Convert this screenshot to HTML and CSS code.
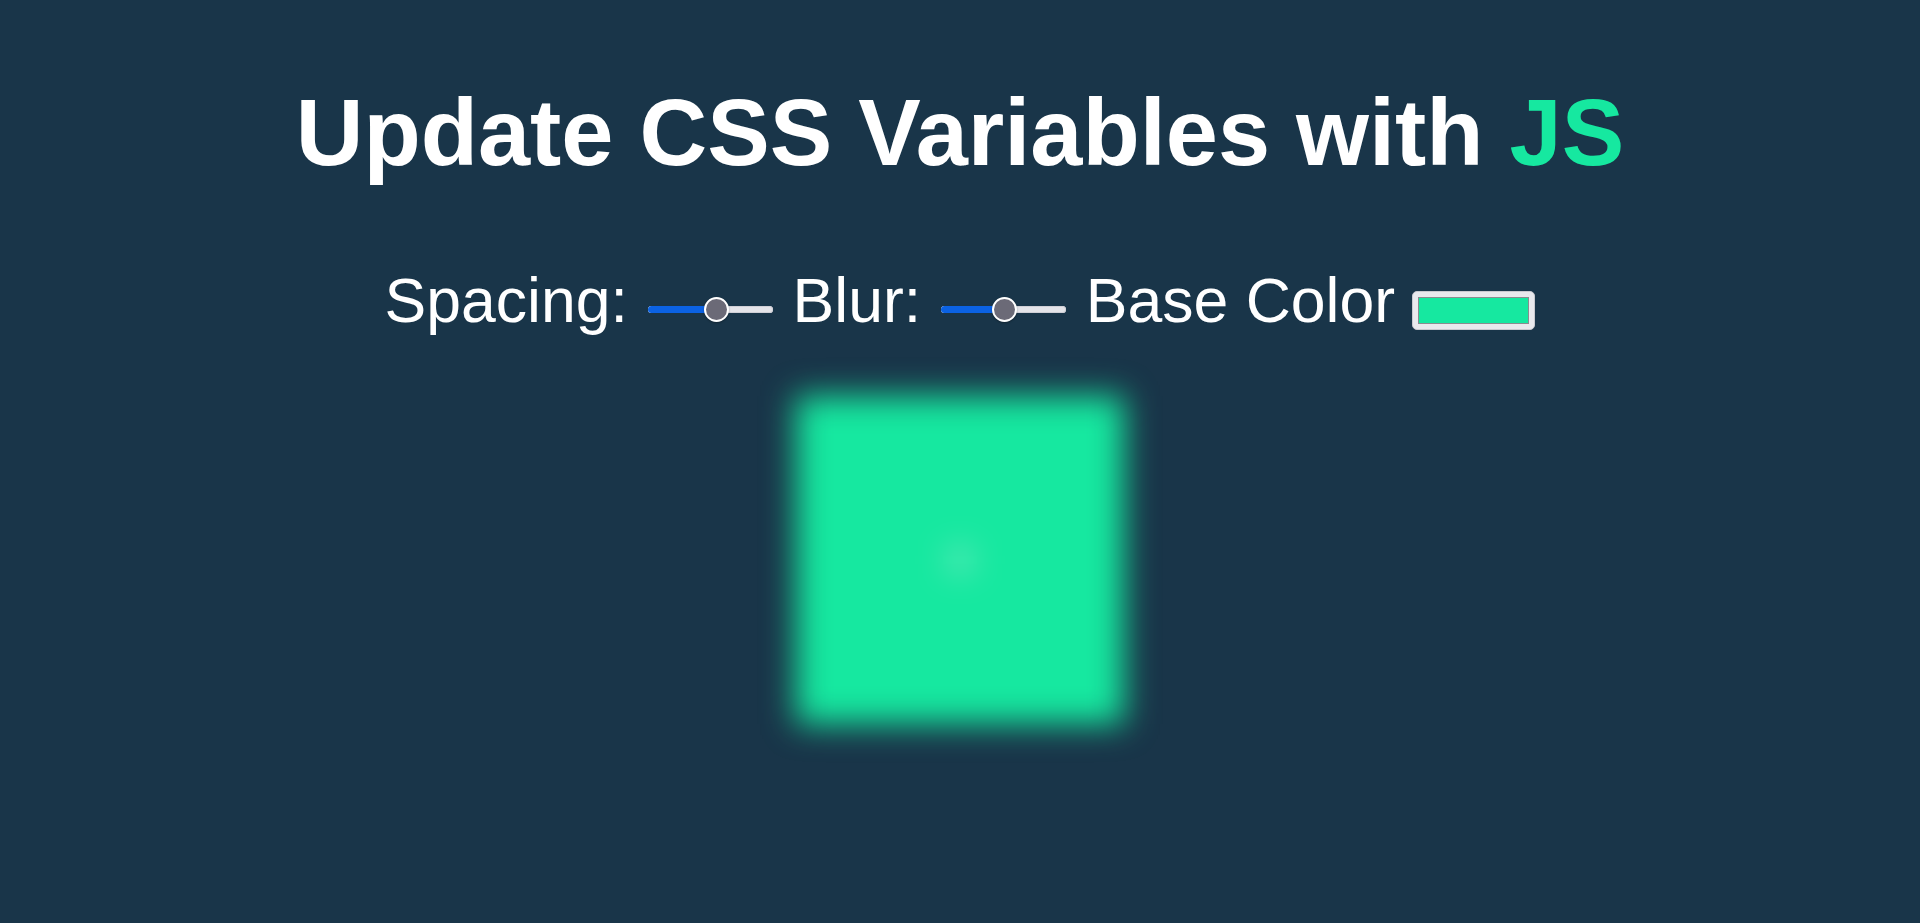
FILE: index.html
```html
<!DOCTYPE html>
<html lang="en">
<head>
<meta charset="utf-8">
<title>Scoped CSS Variables and JS</title>
<link rel="stylesheet" href="styles.css">
</head>
<body>
  <h2 class="title">Update CSS Variables with <span class="hl">JS</span></h2>

  <div class="controls">
    <label class="label">Spacing:</label>
    <span class="slider"><span class="fill fill-spacing"></span><span class="thumb thumb-spacing"></span></span>
    <label class="label">Blur:</label>
    <span class="slider"><span class="fill fill-blur"></span><span class="thumb thumb-blur"></span></span>
    <label class="label">Base Color</label>
    <span class="swatch"><span class="swatch-fill"></span></span>
  </div>

  <div class="photo"><span class="broken"></span></div>
</body>
</html>
```
FILE: styles.css
```css
html {
  background: #193549;
  min-height: 100%;
}
body {
  margin: 0;
  padding: 0 10px 200px;
  color: #ffffff;
  font-family: "Liberation Sans", Arial, sans-serif;
  font-size: 62.5px;
  text-align: center;
}
.title {
  font-size: 93.75px;
  font-weight: bold;
  margin: 0 0 77.8px;
  padding-top: 78.5px;
  line-height: normal;
}
.hl {
  color: #16e8a0;
}
.controls {
  margin-bottom: 60px;
}
.label {
  font-weight: normal;
}
.slider {
  display: inline-block;
  position: relative;
  width: 125px;
  height: 25px;
  margin: 0 2.5px;
  vertical-align: baseline;
}
.slider::before {
  content: "";
  position: absolute;
  left: 0;
  right: 0;
  top: 9px;
  height: 7px;
  border-radius: 4px;
  background: #e4e4e9;
  box-shadow: inset 0 0 0 1px #cfcfd6;
}
.fill {
  position: absolute;
  left: 0;
  top: 9px;
  height: 7px;
  border-radius: 4px;
  background: #0b62e3;
}
.fill-spacing { width: 69px; }
.fill-blur { width: 64px; }
.thumb {
  position: absolute;
  top: 0;
  width: 25px;
  height: 25px;
  box-sizing: border-box;
  border-radius: 50%;
  background: #6b6a77;
  border: 2px solid #ffffff;
  box-shadow: 0 1px 2px rgba(0, 0, 0, 0.3);
}
.thumb-spacing { left: 56px; }
.thumb-blur { left: 51.5px; }
.swatch {
  display: inline-block;
  box-sizing: border-box;
  width: 123px;
  height: 39px;
  padding: 5px;
  border: 1px solid #c9c9cf;
  border-radius: 5px;
  background: #e9e9ed;
  vertical-align: -8px;
}
.swatch-fill {
  display: block;
  height: 100%;
  box-sizing: border-box;
  border: 1px solid #8b8b8f;
  background: #16e8a0;
}
.photo {
  width: 20px;
  height: 20px;
  padding: 154px;
  margin: 0 auto;
  background: #16e8a0;
  filter: blur(16px);
  display: flex;
  align-items: center;
  justify-content: center;
}
.broken {
  display: block;
  width: 22px;
  height: 22px;
  border-radius: 3px;
  background: rgba(200, 235, 222, 0.6);
}
```
